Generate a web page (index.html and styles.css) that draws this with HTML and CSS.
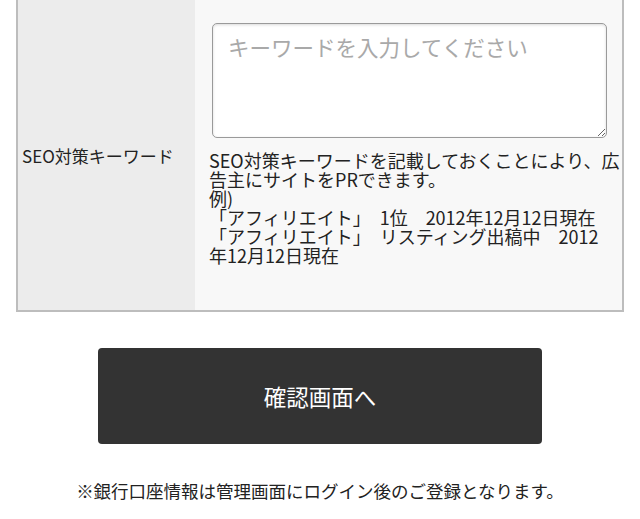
FILE: index.html
```html
<!DOCTYPE html>
<html lang="ja">

<head>
    <meta charset="UTF-8">
    <meta name="viewport" content="width=device-width, initial-scale=1.0">
    <title>登録フォーム</title>
    <link rel="stylesheet" href="styles.css">
</head>

<body>
    <div class="form-wrap">
        <div class="form-row">
            <div class="form-label">SEO対策キーワード</div>
            <div class="form-field">
                <textarea class="keyword-input" placeholder="キーワードを入力してください"></textarea>
                <p class="note">SEO対策キーワードを記載しておくことにより、広告主にサイトをPRできます。<br>例)<br>「アフィリエイト」　1位　2012年12月12日現在<br>「アフィリエイト」　リスティング出稿中　2012<span class="nowrap">年12月12日現在</span></p>
            </div>
        </div>
    </div>
    <div class="submit-area">
        <button type="button" class="submit-button">確認画面へ</button>
    </div>
    <p class="footer-note">※銀行口座情報は管理画面にログイン後のご登録となります。</p>
</body>

</html>
```

FILE: styles.css
```css
body {
    font-family: "Noto Sans CJK JP", "Noto Sans", sans-serif;
    background-color: #ffffff;
    color: #222222;
    margin: 0;
    padding: 0;
}

.form-wrap {
    padding: 0 16px;
}

.form-row {
    display: grid;
    grid-template-columns: 177px 1fr;
    border: 2px solid #bdbdbd;
    border-top: none;
}

.form-label {
    display: flex;
    align-items: center;
    background-color: #ececec;
    padding: 0 4px;
    font-size: 17px;
}

.form-field {
    background-color: #f8f8f8;
    padding: 23px 2px 45px 14px;
}

.keyword-input {
    display: block;
    box-sizing: border-box;
    width: calc(100% - 16px);
    height: 115px;
    margin: 0 13px 0 3px;
    padding: 10px 15px;
    border: 1px solid #9a9a9a;
    border-radius: 5px;
    box-shadow: inset 0 1px 3px rgba(0, 0, 0, 0.15);
    background: #ffffff;
    font-family: inherit;
    font-size: 21.5px;
    line-height: 26px;
    color: #222222;
}

.keyword-input::placeholder {
    color: #a9a9a9;
}

.note {
    margin: 13px 0 0;
    font-size: 18px;
    line-height: 19px;
}

.nowrap {
    white-space: nowrap;
}

.submit-area {
    display: flex;
    justify-content: center;
    margin-top: 36px;
}

.submit-button {
    width: 444px;
    height: 96px;
    border: none;
    border-radius: 4px;
    background-color: #333333;
    color: #ffffff;
    font-family: inherit;
    font-size: 22.5px;
    cursor: pointer;
}

.footer-note {
    margin: 34px 0 0;
    text-align: center;
    font-size: 17.5px;
    line-height: 26px;
}
```
